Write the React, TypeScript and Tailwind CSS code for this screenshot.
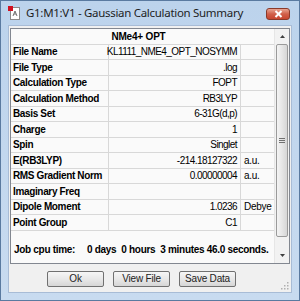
import React from "react";

const rows: [string, string, string][] = [
  ["File Name", "KL1111_NME4_OPT_NOSYMM", ""],
  ["File Type", ".log", ""],
  ["Calculation Type", "FOPT", ""],
  ["Calculation Method", "RB3LYP", ""],
  ["Basis Set", "6-31G(d,p)", ""],
  ["Charge", "1", ""],
  ["Spin", "Singlet", ""],
  ["E(RB3LYP)", "-214.18127322", "a.u."],
  ["RMS Gradient Norm", "0.00000004", "a.u."],
  ["Imaginary Freq", "", ""],
  ["Dipole Moment", "1.0236", "Debye"],
  ["Point Group", "C1", ""],
];

function Btn({ label }: { label: string }) {
  return (
    <div className="w-[57px] h-[16px] border border-[#707070] rounded-[2px] bg-gradient-to-b from-[#f6f6f6] via-[#e8e8e8] to-[#d6d6d6] flex items-center justify-center text-[10px] text-[#222] leading-none font-['Liberation_Sans',sans-serif] tracking-[-0.2px]">
      {label}
    </div>
  );
}

export default function App() {
  return (
    <div className="w-[300px] h-[301px] bg-gradient-to-b from-[#bcd3ec] to-[#c8dbf0] border border-[#5a7aa0] flex flex-col overflow-hidden relative">
      {/* title bar */}
      <div className="h-[24px] flex items-center pl-[7px] pr-[9px] shrink-0">
        <svg width="13" height="14" viewBox="0 0 13 14" className="shrink-0">
          <rect x="2.5" y="1.5" width="9" height="12" fill="#fff" stroke="#8a8a8a" />
          <path d="M5 10 L7 5 L9 10 M6 8 L8 8" stroke="#707070" strokeWidth="1" fill="none" />
          <rect x="0" y="0" width="5" height="5" fill="#d01020" />
        </svg>
        <span className="ml-[5px] text-[11.5px] text-[#1e1e1e] font-['Noto_Sans',sans-serif] tracking-[-0.3px] leading-none">
          G1:M1:V1 - Gaussian Calculation Summary
        </span>
        <div className="ml-auto w-[24px] h-[12px] mt-[1px] rounded-[3px] border border-[#8a3a2a] bg-gradient-to-b from-[#e8a492] via-[#d0604a] to-[#c8452e] flex items-center justify-center">
          <svg width="9" height="8" viewBox="0 0 9 8">
            <path d="M1.5 1 L7.5 7 M7.5 1 L1.5 7" stroke="#fff" strokeWidth="2" />
          </svg>
        </div>
      </div>

      {/* client */}
      <div className="flex-1 mx-[7px] mb-[7px] bg-[#f0f0f0] border border-[#a8bcd6] flex flex-col">
        <div className="mt-[2px] mx-[1px] h-[236px] border border-[#828790] bg-[#fafafa] flex">
          <div className="flex-1 flex flex-col font-['Liberation_Sans',sans-serif] text-[10px] text-black">
            <div className="h-[15.5px] flex items-center justify-center font-bold border-b border-[#d8d8d8] tracking-[-0.2px] pr-[8px]">
              NMe4+ OPT
            </div>
            {rows.map(([k, v, u]) => (
              <div key={k} className="h-[15.5px] flex border-b border-[#d8d8d8]">
                <div className="w-[98px] shrink-0 border-r border-[#d8d8d8] flex items-center pl-[2px] font-bold tracking-[-0.35px] whitespace-nowrap overflow-hidden">
                  {k}
                </div>
                <div className="w-[132px] shrink-0 border-r border-[#d8d8d8] flex items-center justify-end pr-[3px] tracking-[-0.55px] whitespace-nowrap">
                  {v}
                </div>
                <div className="flex-1 flex items-center pl-[3px] tracking-[-0.3px]">{u}</div>
              </div>
            ))}
            <div className="flex-1" />
            <div className="h-[28px] flex items-center pl-[3px] font-bold whitespace-pre tracking-[-0.3px]">
              <span className="w-[73px]">Job cpu time:</span>
              <span>0 days  0 hours  3 minutes 46.0 seconds.</span>
            </div>
          </div>
          {/* scrollbar */}
          <div className="w-[15px] border-l border-[#e6e6e6] bg-[#f2f2f2] flex flex-col items-center">
            <div className="h-[15px] flex items-center justify-center">
              <svg width="5" height="3" viewBox="0 0 5 3"><path d="M0 3 L2.5 0 L5 3Z" fill="#404040" /></svg>
            </div>
            <div className="w-[12px] h-[193px] rounded-[2px] border border-[#9a9a9a] bg-gradient-to-r from-[#f4f4f4] via-[#e6e6e6] to-[#d6d6d6] flex items-center justify-center">
              <svg width="6" height="5" viewBox="0 0 6 5"><path d="M0 0.5 H6 M0 2.5 H6 M0 4.5 H6" stroke="#707070" /></svg>
            </div>
            <div className="flex-1" />
            <div className="h-[15px] flex items-center justify-center">
              <svg width="5" height="3" viewBox="0 0 5 3"><path d="M0 0 L2.5 3 L5 0Z" fill="#404040" /></svg>
            </div>
          </div>
        </div>
        <div className="flex-1 flex items-center pl-[38px] gap-[9px] pt-[2px] relative">
          <Btn label="Ok" />
          <Btn label="View File" />
          <Btn label="Save Data" />
          <svg width="8" height="8" viewBox="0 0 8 8" className="absolute right-[2px] bottom-[2px]">
            <rect x="6" y="6" width="1.5" height="1.5" fill="#b0b0b0" />
            <rect x="3" y="6" width="1.5" height="1.5" fill="#b0b0b0" />
            <rect x="6" y="3" width="1.5" height="1.5" fill="#b0b0b0" />
            <rect x="0" y="6" width="1.5" height="1.5" fill="#b0b0b0" />
            <rect x="3" y="3" width="1.5" height="1.5" fill="#b0b0b0" />
            <rect x="6" y="0" width="1.5" height="1.5" fill="#b0b0b0" />
          </svg>
        </div>
      </div>
    </div>
  );
}
